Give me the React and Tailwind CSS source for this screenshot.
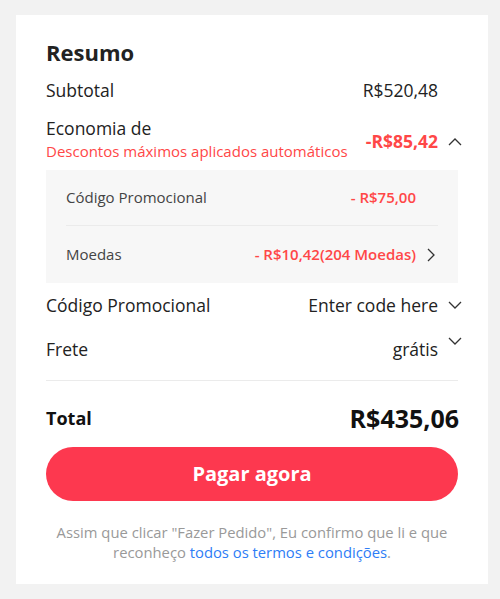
import React from "react";

const Chevron = ({ dir = "down", className = "" }) => {
  const paths = {
    down: "M1 4l6 6 6-6",
    up: "M1 10l6-6 6 6",
    right: "M4 1l6 6-6 6",
  };
  return (
    <svg viewBox="0 0 14 14" className={className} fill="none" stroke="currentColor" strokeWidth="1.3">
      <path d={paths[dir]} />
    </svg>
  );
};

function App() {
  return (
    <div className="min-h-screen bg-[#f2f2f2] pt-[15px] pl-[16px] pr-[12px] pb-[15px] font-['Open_Sans',sans-serif] text-[#222]">
      <div className="bg-white px-[30px] pt-[22px] pb-[22px]">
        <h2 className="text-[22px] font-bold leading-[30px] text-[#222]">Resumo</h2>

        {/* linhas principais */}
        <div className="flex items-center justify-between mt-[10px] text-[17.5px] leading-[26px]">
          <span>Subtotal</span>
          <span className="mr-[20px]">R$520,48</span>
        </div>

        <div className="flex items-center justify-between mt-[12px]">
          <div className="flex flex-col">
            <span className="text-[17.5px] leading-[26px]">Economia de</span>
            <span className="text-[15px] leading-[20px] text-[#ff4747]">Descontos máximos aplicados automáticos</span>
          </div>
          <div className="flex items-center mt-[7px]">
            <span className="text-[17.5px] font-bold text-[#ff4747]">-R$85,42</span>
            <Chevron dir="up" className="w-[14px] h-[14px] ml-[10px] -mr-[4px] text-[#333]" />
          </div>
        </div>

        {/* detalhes da economia */}
        <div className="bg-[#f7f7f7] mt-[9px] px-[20px]">
          <div className="flex items-center justify-between h-[56px] border-b border-[#ebebeb] text-[15px]">
            <span className="text-[#444]">Código Promocional</span>
            <span className="font-semibold text-[#ff4747] mr-[22px]">- R$75,00</span>
          </div>
          <div className="flex items-center justify-between h-[57px] text-[15px]">
            <span className="text-[#444]">Moedas</span>
            <div className="flex items-center">
              <span className="font-semibold text-[#ff4747]">- R$10,42(204 Moedas)</span>
              <Chevron dir="right" className="w-[14px] h-[14px] ml-[8px] text-[#333]" />
            </div>
          </div>
        </div>

        <div className="flex items-center justify-between mt-[9px] text-[17.5px] leading-[26px]">
          <span>Código Promocional</span>
          <div className="flex items-center">
            <span>Enter code here</span>
            <Chevron dir="down" className="w-[14px] h-[14px] ml-[10px] -mr-[4px] text-[#333]" />
          </div>
        </div>

        <div className="flex items-center justify-between mt-[18px] text-[17.5px] leading-[26px] pb-[18px] border-b border-[#ebebeb]">
          <span>Frete</span>
          <div className="flex items-start">
            <span>grátis</span>
            <Chevron dir="down" className="w-[14px] h-[14px] ml-[10px] -mr-[4px] text-[#333] -mt-[2px]" />
          </div>
        </div>

        <div className="flex items-center justify-between mt-[20px] leading-[34px]">
          <span className="text-[18px] font-bold text-[#111]">Total</span>
          <span className="text-[25px] font-bold text-[#111] -mr-[1px]">R$435,06</span>
        </div>

        <button className="w-full h-[54px] mt-[12px] rounded-full bg-[#fd384f] text-white text-[20px] font-bold">
          Pagar agora
        </button>

        <p className="mt-[21px] text-center text-[14.8px] leading-[20px] text-[#999]">
          Assim que clicar "Fazer Pedido", Eu confirmo que li e que reconheço{" "}
          <span className="text-[#2e7df6]">todos os termos e condições</span>.
        </p>
      </div>
    </div>
  );
}

export default App;
